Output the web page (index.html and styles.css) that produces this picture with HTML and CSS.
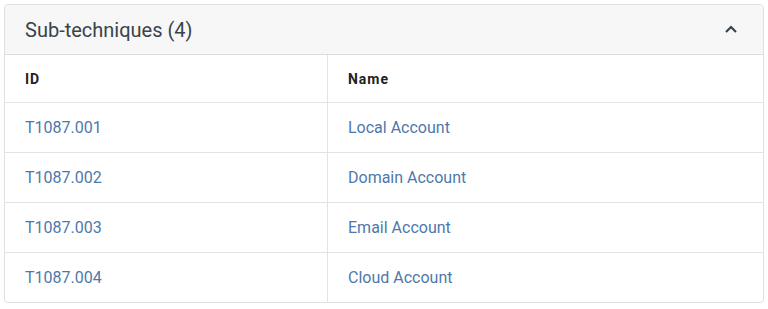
FILE: index.html
```html
<!DOCTYPE html>
<html>
<head>
<meta charset="utf-8">
<link rel="stylesheet" href="styles.css">
</head>
<body>
<div class="card">
  <div class="card-header">
    <h2 class="title">Sub-techniques (4)</h2>
    <svg class="chevron" width="14" height="10" viewBox="0 0 14 10"><path d="M2 8 L7 3 L12 8" fill="none" stroke="#39434c" stroke-width="2.2"/></svg>
  </div>
  <table class="table">
    <thead>
      <tr><th class="col-id">ID</th><th>Name</th></tr>
    </thead>
    <tbody>
      <tr><td><a href="#">T1087.001</a></td><td><a href="#">Local Account</a></td></tr>
      <tr><td><a href="#">T1087.002</a></td><td><a href="#">Domain Account</a></td></tr>
      <tr><td><a href="#">T1087.003</a></td><td><a href="#">Email Account</a></td></tr>
      <tr><td><a href="#">T1087.004</a></td><td><a href="#">Cloud Account</a></td></tr>
    </tbody>
  </table>
</div>
</body>
</html>
```
FILE: styles.css
```css
html, body { margin: 0; padding: 0; background: #fff; }
body { padding: 4px; font-family: Roboto, "Liberation Sans", sans-serif; color: #39434c; }
.card {
  width: 758px;
  border: 1px solid #e0e0e0;
  border-radius: 4px;
  overflow: hidden;
}
.card-header {
  height: 49px;
  background: #f7f7f7;
  border-bottom: 1px solid #dcdcdc;
  display: flex;
  align-items: center;
  justify-content: space-between;
  padding: 0 25px 0 20px;
}
.title { margin: 0; font-size: 20px; font-weight: 400; color: #39434c; }
.chevron { display: block; margin-top: -1px; }
.table { width: 100%; border-collapse: collapse; }
th, td { padding: 0 20px; text-align: left; border-bottom: 1px solid #e3e3e3; }
th + th, td + td { border-left: 1px solid #e3e3e3; }
tbody tr:last-child td { border-bottom: none; }
th { height: 47px; font-size: 14px; font-weight: 700; letter-spacing: 0.07em; color: #222; }
td { height: 49px; font-size: 16px; }
.col-id { width: 282px; }
a { color: #4f78aa; text-decoration: none; }
```
